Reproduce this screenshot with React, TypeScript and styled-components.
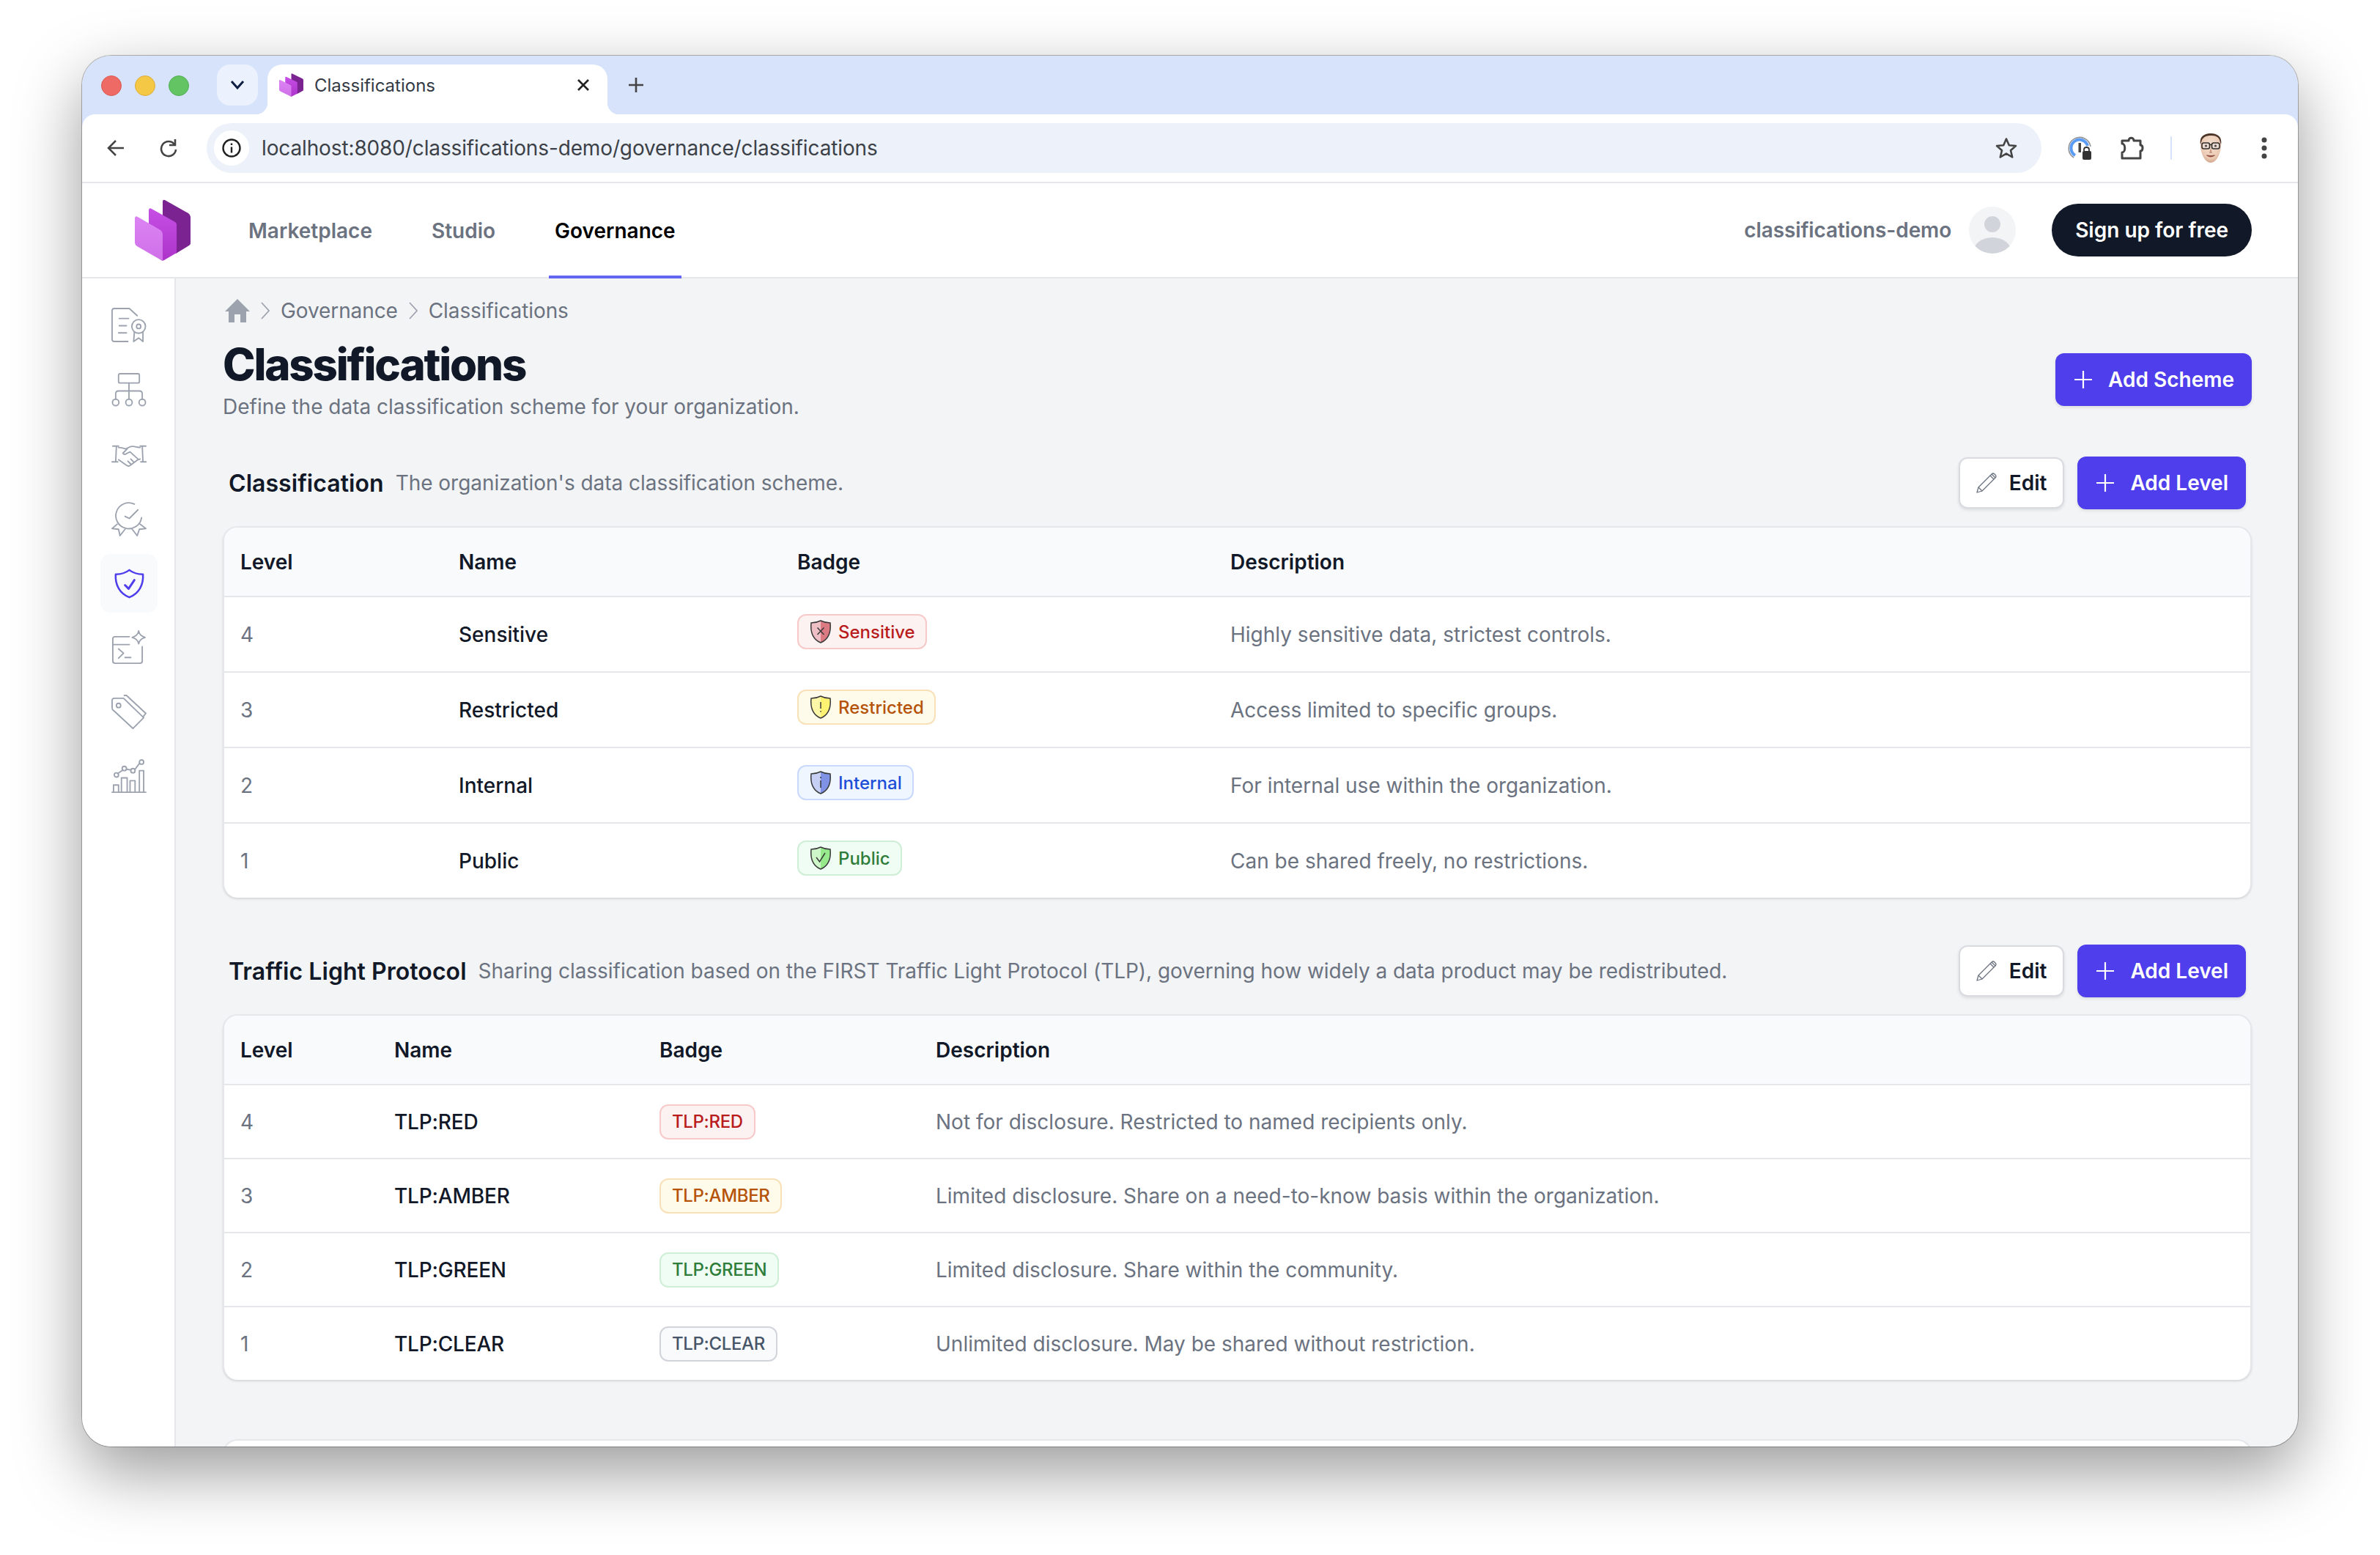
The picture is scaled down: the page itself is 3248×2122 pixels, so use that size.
import React from 'react';
import styled, { createGlobalStyle } from 'styled-components';

const GlobalStyle = createGlobalStyle`
  html, body {
    margin: 0;
    height: 100%;
    background: #fff;
    overflow: hidden;
  }
  * { box-sizing: border-box; }
  #root { height: 100%; }
`;

const Page = styled.div`
  height: 100%;
  padding: 76px 112px 148px;
  font-family: Inter, 'Noto Sans', sans-serif;
  color: #111827;
`;

const Window = styled.div`
  height: 100%;
  display: flex;
  flex-direction: column;
  overflow: hidden;
  border-radius: 40px;
  background: #f3f4f6;
  box-shadow: 0 0 0 1px rgba(0, 0, 0, 0.28), 0 34px 92px rgba(0, 0, 0, 0.4);
`;

/* browser chrome */
const TitleBar = styled.div`
  flex: none;
  height: 80px;
  padding: 12px 0 0 26px;
  display: flex;
  align-items: flex-start;
  background: #d6e3fa;
`;

const Lights = styled.div`
  height: 58px;
  display: flex;
  align-items: center;
  gap: 18px;
  margin-right: 38px;
`;

const Light = styled.span<{ $c: string; $b: string }>`
  width: 28px;
  height: 28px;
  border-radius: 50%;
  background: ${(p) => p.$c};
  border: 1px solid ${(p) => p.$b};
`;

const TabSearch = styled.div`
  width: 56px;
  height: 56px;
  margin-right: 13px;
  border-radius: 18px;
  background: #ebf1fd;
  display: flex;
  align-items: center;
  justify-content: center;
`;

const Tab = styled.div`
  position: relative;
  width: 464px;
  height: 68px;
  padding: 0 24px 12px 16px;
  display: flex;
  align-items: center;
  background: #fff;
  border-radius: 20px 20px 0 0;
  font-size: 24px;
  color: #333a45;

  &::before,
  &::after {
    content: '';
    position: absolute;
    bottom: 0;
    width: 16px;
    height: 16px;
  }
  &::before {
    left: -16px;
    background: radial-gradient(circle at 0 0, transparent 16px, #fff 16.5px);
  }
  &::after {
    right: -16px;
    background: radial-gradient(circle at 100% 0, transparent 16px, #fff 16.5px);
  }
`;

const TabTitle = styled.span`
  flex: 1;
  margin-left: 15px;
`;

const NewTab = styled.div`
  margin: 16px 0 0 27px;
  height: 24px;
  color: #444;
`;

const Toolbar = styled.div`
  flex: none;
  height: 92px;
  padding: 0 32px 0 33px;
  display: flex;
  align-items: center;
  background: #fff;
  border-radius: 18px 18px 0 0;
`;

const ToolbarStrip = styled.div`
  flex: none;
  background: #d6e3fa;
`;

const NavIcon = styled.div<{ $mr: number; $ml?: number }>`
  width: 24px;
  height: 30px;
  margin-left: ${(p) => p.$ml ?? 0}px;
  margin-right: ${(p) => p.$mr}px;
  display: flex;
  align-items: center;
  justify-content: center;
`;

const Omnibox = styled.div`
  width: 2504px;
  height: 68px;
  padding: 0 33px 0 10px;
  display: flex;
  align-items: center;
  border-radius: 34px;
  background: #edf2fa;
`;

const InfoDot = styled.div`
  flex: none;
  width: 48px;
  height: 48px;
  margin-right: 17px;
  border-radius: 50%;
  background: #fff;
  display: flex;
  align-items: center;
  justify-content: center;
`;

const Url = styled.span`
  flex: 1;
  font-size: 28px;
  letter-spacing: -0.13px;
  color: #3c4148;
`;

const ToolbarRight = styled.div`
  flex: 1;
  display: flex;
  align-items: center;
  padding-left: 36px;
`;

const ToolDivider = styled.span`
  width: 2px;
  height: 32px;
  margin: 0 38px 0 36px;
  border-radius: 2px;
  background: #d6e3fa;
`;

const Spacer = styled.div<{ $w: number }>`
  flex: none;
  width: ${(p) => p.$w}px;
`;

/* app header */
const AppHeader = styled.header`
  flex: none;
  height: 132px;
  padding-left: 72px;
  padding-right: 63px;
  display: flex;
  align-items: stretch;
  background: #fff;
  border-top: 2px solid #e5e7eb;
  border-bottom: 2px solid #e5e7eb;
`;

const LogoWrap = styled.div`
  display: flex;
  align-items: center;
  margin-right: 71px;
`;

const NavBar = styled.nav`
  flex: 1;
  display: flex;
  gap: 65px;
`;

const NavLink = styled.a<{ $active?: boolean }>`
  padding: 0 8px;
  margin-bottom: -2px;
  display: flex;
  align-items: center;
  font-size: 28px;
  font-weight: 600;
  color: ${(p) => (p.$active ? '#000' : '#6b7280')};
  border-bottom: 4px solid ${(p) => (p.$active ? '#6366f1' : 'transparent')};
  border-top: 4px solid transparent;
`;

const UserBox = styled.div`
  display: flex;
  align-items: center;
`;

const UserName = styled.span`
  font-size: 28px;
  font-weight: 600;
  letter-spacing: -0.1px;
  color: #6b7280;
  margin-right: 24px;
`;

const Avatar = styled.div`
  width: 64px;
  height: 64px;
  margin-right: 49px;
  border-radius: 50%;
  overflow: hidden;
  background: #f3f4f6;
`;

const SignUp = styled.button`
  height: 72px;
  padding: 0 32px;
  border: 0;
  border-radius: 36px;
  background: #111827;
  color: #fff;
  font: 600 28px Inter, sans-serif;
`;

/* body */
const Body = styled.div`
  flex: 1;
  min-height: 0;
  display: flex;
`;

const Sidebar = styled.aside`
  flex: none;
  width: 128px;
  padding: 24px 0 0 2px;
  display: flex;
  flex-direction: column;
  align-items: center;
  gap: 8px;
  background: #fff;
  border-right: 2px solid #e5e7eb;
`;

const SideItem = styled.div<{ $active?: boolean }>`
  width: 78px;
  height: 80px;
  border-radius: 14px;
  display: flex;
  align-items: center;
  justify-content: center;
  background: ${(p) => (p.$active ? '#f9fafb' : 'transparent')};
`;

const Content = styled.main`
  flex: 1;
  min-width: 0;
  padding: 24px 63px 0 64px;
  overflow: hidden;
`;

const Crumbs = styled.div`
  height: 40px;
  padding-left: 3px;
  display: flex;
  align-items: center;
  font-size: 28px;
  letter-spacing: -0.1px;
  color: #6b7280;
`;

const CrumbSep = styled.span`
  display: flex;
  margin: 0 15px;
`;

const PageHead = styled.div`
  margin-top: 17px;
  display: flex;
  align-items: center;
  justify-content: space-between;
`;

const PageTitle = styled.h1`
  margin: 0;
  font-size: 60px;
  line-height: 72px;
  font-weight: 800;
  letter-spacing: -2.2px;
  color: #111827;
`;

const PageSub = styled.p`
  margin: 2px 0 0;
  font-size: 28px;
  line-height: 40px;
  color: #6b7280;
`;

const Button = styled.button<{ $primary?: boolean }>`
  height: ${(p) => (p.$primary ? 72 : 70)}px;
  padding: 0 ${(p) => (p.$primary ? 24 : 22)}px;
  display: flex;
  align-items: center;
  gap: ${(p) => (p.$primary ? 20 : 17)}px;
  border-radius: 12px;
  font: 600 28px Inter, sans-serif;
  color: ${(p) => (p.$primary ? '#fff' : '#111827')};
  background: ${(p) => (p.$primary ? '#4e3eec' : '#fff')};
  border: ${(p) => (p.$primary ? '0' : '2px solid #d9dbe1')};
  box-shadow: 0 2px 4px rgba(0, 0, 0, 0.1);
`;

const SectionHead = styled.div<{ $top: number }>`
  height: 72px;
  margin-top: ${(p) => p.$top}px;
  padding: 0 8px;
  display: flex;
  align-items: center;
`;

const SectionTitle = styled.h2`
  margin: 0 16px 0 0;
  font-size: 32px;
  font-weight: 600;
  letter-spacing: 0.05px;
  color: #111827;
`;

const SectionDesc = styled.span`
  flex: 1;
  font-size: 28px;
  letter-spacing: -0.03px;
  color: #6b7280;
`;

const SectionActions = styled.div`
  display: flex;
  align-items: center;
  gap: 18px;
`;

const Card = styled.div`
  margin-top: 23px;
  background: #fff;
  border: 2px solid #e5e7eb;
  border-bottom: 0;
  border-radius: 20px;
  overflow: hidden;
  box-shadow: 0 2px 3px rgba(0, 0, 0, 0.12);
`;

const NextCard = styled(Card)`
  margin-top: 81px;
  height: 200px;
`;

const HeadRow = styled.div<{ $cols: string }>`
  height: 95px;
  display: grid;
  grid-template-columns: ${(p) => p.$cols};
  align-items: center;
  background: #f9fafb;
  border-bottom: 2px solid #e5e7eb;
  font-size: 28px;
  font-weight: 600;
`;

const Row = styled.div<{ $cols: string; $h: number }>`
  height: ${(p) => p.$h}px;
  display: grid;
  grid-template-columns: ${(p) => p.$cols};
  align-items: center;
  border-bottom: 2px solid #e5e7eb;
  font-size: 28px;

  &:last-child {
    border-bottom: 0;
    height: ${(p) => p.$h - 2}px;
  }
`;

const Cell = styled.div`
  padding-left: 22px;
`;

const LevelCell = styled(Cell)`
  color: #6b7280;
`;

const NameCell = styled(Cell)`
  font-weight: 500;
  color: #111827;
`;

const TlpName = styled(NameCell)`
  letter-spacing: -0.2px;
`;

const DescCell = styled(Cell)`
  color: #6b7280;
`;

type Tone = 'red' | 'amber' | 'blue' | 'green' | 'gray';

const tones: Record<Tone, { bg: string; border: string; text: string; light: string; dark: string }> = {
  red: { bg: '#fdf2f2', border: '#f7c9c9', text: '#b91c1c', light: '#eebfc4', dark: '#dc7a84' },
  amber: { bg: '#fffbeb', border: '#f8e0b8', text: '#b45309', light: '#fdf8a8', dark: '#fdf272' },
  blue: { bg: '#eff6ff', border: '#c9d9fd', text: '#1d4ed8', light: '#c6d0f4', dark: '#7f92e6' },
  green: { bg: '#f0fdf4', border: '#cfeed6', text: '#2e7d3a', light: '#cdf6c9', dark: '#96ea8c' },
  gray: { bg: '#f9fafb', border: '#d1d5db', text: '#475569', light: '#fff', dark: '#fff' },
};

const Badge = styled.span<{ $tone: Tone; $icon?: boolean }>`
  height: 48px;
  padding: ${(p) => (p.$icon ? '0 14px 0 16px' : '0 15px')};
  margin-bottom: ${(p) => (p.$icon ? 7 : 0)}px;
  display: inline-flex;
  align-items: center;
  gap: 10px;
  border-radius: 12px;
  font-size: 24px;
  font-weight: 500;
  letter-spacing: ${(p) => (p.$icon ? 0 : -0.35)}px;
  color: ${(p) => tones[p.$tone].text};
  background: ${(p) => tones[p.$tone].bg};
  border: 2px solid ${(p) => tones[p.$tone].border};
`;

const LogoMark = ({ w, h }: { w: number; h: number }) => (
  <svg width={w} height={h} viewBox="0 0 76 84" preserveAspectRatio="none">
    <defs>
      <linearGradient id="logoFront" x1="0" y1="0" x2="0" y2="1">
        <stop offset="0" stopColor="#dc84f4" />
        <stop offset="1" stopColor="#cf6fe8" />
      </linearGradient>
      <linearGradient id="logoMid" x1="0" y1="0" x2="0" y2="1">
        <stop offset="0" stopColor="#c64fe6" />
        <stop offset="1" stopColor="#ad33c9" />
      </linearGradient>
    </defs>
    <path d="M38 3Q38 0 41 1L73 19Q76 21 76 24V60Q76 62 74 63L56 74L38 60Z" fill="#7b2390" />
    <path d="M19 15Q19 11 23 13L55 31Q57 32 57 35V73L40 83Q38 84 36 83L19 60Z" fill="url(#logoMid)" />
    <path d="M0 26Q0 22 4 24L35 42Q38 44 38 47V84L36 83L3 64Q0 62 0 59Z" fill="url(#logoFront)" />
  </svg>
);

const IconGray = '#9ca3af';

const sideIcons: React.ReactNode[] = [
  <g key="doc">
    <path d="M22 46H3Q0 46 0 43V3Q0 0 3 0H24L35 10" />
    <path d="M10 14H23M10 24H20M9 34H20" />
    <circle cx="37" cy="25" r="9.5" />
    <circle cx="37" cy="25" r="3" />
    <path d="M31 33L30 46L37 41L43 46L43 33" />
  </g>,
  <g key="org">
    <rect x="9" y="1" width="29" height="13" rx="2" />
    <path d="M23.5 14V36M5 36V29Q5 25 9 25H38Q42 25 42 29V36" />
    <ellipse cx="5" cy="41" rx="4.5" ry="4.5" />
    <ellipse cx="23.5" cy="41" rx="4.5" ry="4.5" />
    <ellipse cx="42" cy="41" rx="4.5" ry="4.5" />
  </g>,
  <g key="hands">
    <path d="M1 12H9M6 12L5 34M0 34H8M39 12H47M42 12L43 34M40 34H48" />
    <path d="M9 14C13 14 16 15 19 16L25 13C30 11 34 14 39 14M39 30L36 31L25 39Q22 41 19 38L9 31" />
    <path d="M21 16L15 22Q17 25 21 22L25 20L36 30M30 34L26 30M26 37L22 33" />
  </g>,
  <g key="award">
    <path d="M31 3A18 18 0 1 0 41 22" />
    <path d="M18 20L24 23L36 11" />
    <path d="M7 31L0 37L9 38L11 47L18 38M39 31L47 37L38 38L35 47L28 38" />
  </g>,
  <g key="shield" stroke="#4e3eec" strokeWidth="2.6">
    <path d="M24 5C29 9 36 11 43 11C44 26 37 38 24 43C11 38 4 26 5 11C12 11 19 9 24 5Z" />
    <path d="M18 26L23 31L31 19" strokeWidth="3" />
  </g>,
  <g key="term">
    <path d="M24 8H4Q1 8 1 11V42Q1 45 4 45H39Q42 45 42 42V22M1 19H24" />
    <path d="M9 25L16 31L9 38M18 37H26" />
    <path d="M37 0Q38 7 46 9Q38 11 37 18Q36 11 28 9Q36 7 37 0Z" />
  </g>,
  <g key="tag">
    <path d="M3 4H16L44 31L29 46L2 21Q0 20 0 17V7Q0 4 3 4Z" />
    <circle cx="9" cy="14" r="3" />
    <path d="M17 0H20L47 25L43 30" />
  </g>,
  <g key="chart">
    <path d="M0 45H47M2 45V35H9V45M13 45V25H21V45M25 45V29H32V45M38 45V15H44V45" />
    <path d="M8 19L15 14M20 13L26 14M32 13L38 5" />
    <circle cx="6" cy="21" r="3" />
    <circle cx="17" cy="12" r="3" />
    <circle cx="29" cy="15" r="3" />
    <circle cx="41" cy="3" r="3" />
  </g>,
];

const SideIcon = ({ children }: { children: React.ReactNode }) => (
  <svg width="48" height="48" viewBox="-0.5 -1 48 49" fill="none" stroke={IconGray} strokeWidth="1.9" strokeLinecap="round" strokeLinejoin="round">
    {children}
  </svg>
);

const shieldMarks: Partial<Record<Tone, React.ReactNode>> = {
  red: <path d="M9.5 10.5L18.5 20M18.5 10.5L9.5 20" />,
  amber: <path d="M14 9V18M14 21V22.5" />,
  blue: <path d="M14 8V10M14 13V23" />,
  green: <path d="M8 15L12.5 21L20 9" />,
};

const ShieldIcon = ({ tone }: { tone: Tone }) => (
  <svg width="28" height="32" viewBox="0 0 28 32" fill="none">
    <path d="M14 1C18 3 23 4 27 4C28 14 26 26 14 31C2 26 0 14 1 4C5 4 10 3 14 1Z" fill={tones[tone].light} />
    <path d="M14 1C18 3 23 4 27 4C28 14 26 26 14 31Z" fill={tones[tone].dark} />
    <path d="M14 1C18 3 23 4 27 4C28 14 26 26 14 31C2 26 0 14 1 4C5 4 10 3 14 1Z" stroke="#3a3a3a" strokeWidth="1.5" />
    <g stroke="#3a3a3a" strokeWidth="1.5">{shieldMarks[tone]}</g>
  </svg>
);

const PencilIcon = () => (
  <svg width="28" height="28" viewBox="0 0 28 28" fill="none" stroke="#6b7280" strokeWidth="1.3" strokeLinejoin="round">
    <path d="M1 27L3 20L21 2Q23 0 25 2L26 3Q28 5 26 7L8 25Z" />
    <path d="M3 20L8 25M19 4L24 9M21 2L26 7" />
  </svg>
);

const PlusIcon = () => (
  <svg width="28" height="28" viewBox="0 0 28 28" fill="none" stroke="#fff" strokeWidth="2.2">
    <path d="M14 2V26M2 14H26" />
  </svg>
);

const FaceAvatar = () => (
  <svg width="30" height="40" viewBox="0 0 30 40">
    <defs>
      <radialGradient id="faceSkin" cx="0.5" cy="0.4" r="0.65">
        <stop offset="0" stopColor="#f3dfd0" />
        <stop offset="0.7" stopColor="#ebcab4" />
        <stop offset="1" stopColor="#c99a80" />
      </radialGradient>
    </defs>
    <path d="M1 12C0 4 7 0 15 0C23 0 30 4 29 12C30 24 24 40 15 40C6 40 0 24 1 12Z" fill="url(#faceSkin)" />
    <path d="M1 15C-1 5 6 0 15 0C24 0 31 5 29 15L27 9C25 4 21 3 15 3C9 3 5 5 3 9Z" fill="#4a3428" />
    <rect x="3" y="13" width="10.5" height="8" rx="2.5" fill="#e9d9ce" stroke="#34302e" strokeWidth="1.6" />
    <rect x="16.5" y="13" width="10.5" height="8" rx="2.5" fill="#e9d9ce" stroke="#34302e" strokeWidth="1.6" />
    <path d="M13.5 15.5H16.5" stroke="#34302e" strokeWidth="1.4" />
    <circle cx="8.5" cy="17" r="1.6" fill="#4e4a48" />
    <circle cx="21.5" cy="17" r="1.6" fill="#4e4a48" />
    <path d="M15 20L13 27H17Z" fill="#c99a80" />
    <path d="M9.5 30Q15 34 20.5 30Q15 31 9.5 30Z" fill="#8e4a3e" stroke="#8e4a3e" strokeWidth="0.9" />
  </svg>
);

const Columns = {
  first: '298px 462px 591px 1fr',
  second: '210px 362px 377px 1fr',
};

const classificationRows: { level: number; name: string; tone: Tone; desc: string }[] = [
  { level: 4, name: 'Sensitive', tone: 'red', desc: 'Highly sensitive data, strictest controls.' },
  { level: 3, name: 'Restricted', tone: 'amber', desc: 'Access limited to specific groups.' },
  { level: 2, name: 'Internal', tone: 'blue', desc: 'For internal use within the organization.' },
  { level: 1, name: 'Public', tone: 'green', desc: 'Can be shared freely, no restrictions.' },
];

const tlpRows: { level: number; name: string; tone: Tone; desc: string }[] = [
  { level: 4, name: 'TLP:RED', tone: 'red', desc: 'Not for disclosure. Restricted to named recipients only.' },
  { level: 3, name: 'TLP:AMBER', tone: 'amber', desc: 'Limited disclosure. Share on a need-to-know basis within the organization.' },
  { level: 2, name: 'TLP:GREEN', tone: 'green', desc: 'Limited disclosure. Share within the community.' },
  { level: 1, name: 'TLP:CLEAR', tone: 'gray', desc: 'Unlimited disclosure. May be shared without restriction.' },
];

const TableHead = ({ cols }: { cols: string }) => (
  <HeadRow $cols={cols}>
    <Cell>Level</Cell>
    <Cell>Name</Cell>
    <Cell>Badge</Cell>
    <Cell>Description</Cell>
  </HeadRow>
);

const Actions = () => (
  <SectionActions>
    <Button>
      <PencilIcon />
      Edit
    </Button>
    <Button $primary>
      <PlusIcon />
      Add Level
    </Button>
  </SectionActions>
);

const ChevronSep = () => (
  <svg width="12" height="24" viewBox="0 0 12 24" fill="none" stroke="#9ca3af" strokeWidth="1.7">
    <path d="M1 1L11 12L1 23" />
  </svg>
);

const App = () => {
  return (
    <Page>
      <GlobalStyle />
      <Window>
        <TitleBar>
          <Lights>
            <Light $c="#ee6a64" $b="#d95a54" />
            <Light $c="#f4c745" $b="#dcae38" />
            <Light $c="#63c463" $b="#52ad53" />
          </Lights>
          <TabSearch>
            <svg width="20" height="14" viewBox="0 0 20 14" fill="none" stroke="#0f1f44" strokeWidth="3">
              <path d="M2 2L10 11L18 2" />
            </svg>
          </TabSearch>
          <Tab>
            <LogoMark w={33} h={32} />
            <TabTitle>Classifications</TabTitle>
            <svg width="18" height="18" viewBox="0 0 18 18" stroke="#222" strokeWidth="2.6">
              <path d="M2 2L16 16M16 2L2 16" />
            </svg>
          </Tab>
          <NewTab>
            <svg width="24" height="24" viewBox="0 0 24 24" stroke="#444" strokeWidth="2.6">
              <path d="M12 2V22M2 12H22" />
            </svg>
          </NewTab>
        </TitleBar>
        <ToolbarStrip>
          <Toolbar>
            <NavIcon $ml={1} $mr={48}>
              <svg width="24" height="24" viewBox="0 0 24 24" fill="none" stroke="#444" strokeWidth="2.5">
                <path d="M23 12H3M12 2L2 12L12 22" />
              </svg>
            </NavIcon>
            <NavIcon $mr={40}>
              <svg width="24" height="26" viewBox="0 0 24 26" fill="none" stroke="#444" strokeWidth="2.6">
                <path d="M20 8A10 10 0 1 0 22 15" />
                <path d="M21 1V9H13" />
              </svg>
            </NavIcon>
            <Omnibox>
              <InfoDot>
                <svg width="26" height="26" viewBox="0 0 26 26" fill="none" stroke="#222" strokeWidth="2.4">
                  <circle cx="13" cy="13" r="11.5" />
                  <path d="M13 11.5V19.5M13 6.5V9" />
                </svg>
              </InfoDot>
              <Url>localhost:8080/classifications-demo/governance/classifications</Url>
              <svg width="30" height="30" viewBox="0 0 30 30" fill="none" stroke="#444" strokeWidth="2.6" strokeLinejoin="round">
                <path d="M15 2.5L18.8 11.2L28 12L21 18.2L23.2 27.5L15 22.6L6.8 27.5L9 18.2L2 12L11.2 11.2Z" />
              </svg>
            </Omnibox>
            <ToolbarRight>
              <svg width="32" height="32" viewBox="0 0 32 32" fill="none">
                <path d="M8 29A15 15 0 1 1 31 14" stroke="#8f9399" strokeWidth="1.6" />
                <path d="M10 26A11.5 11.5 0 1 1 27 13" stroke="#5a9bf6" strokeWidth="4" />
                <rect x="14.5" y="9" width="3.5" height="13" fill="#444" />
                <path d="M22 20V18Q22 15 25.5 15Q29 15 29 18V20" stroke="#333" strokeWidth="1.8" />
                <rect x="20" y="20" width="12" height="12" rx="2" fill="#333" />
              </svg>
              <Spacer $w={40} />
              <svg width="32" height="32" viewBox="0 0 32 32" fill="none" stroke="#444" strokeWidth="3" strokeLinejoin="round">
                <path d="M2 6H11C11 1 18 1 18 6H27V12C31 12 31 20 27 20V30H2V22C7 22 7 10 2 10Z" />
              </svg>
              <ToolDivider />
              <FaceAvatar />
              <Spacer $w={54} />
              <svg width="8" height="32" viewBox="0 0 8 32" fill="#444">
                <circle cx="4" cy="5" r="3.5" />
                <circle cx="4" cy="16" r="3.5" />
                <circle cx="4" cy="27" r="3.5" />
              </svg>
            </ToolbarRight>
          </Toolbar>
        </ToolbarStrip>
        <AppHeader>
          <LogoWrap>
            <LogoMark w={76} h={84} />
          </LogoWrap>
          <NavBar>
            <NavLink>Marketplace</NavLink>
            <NavLink>Studio</NavLink>
            <NavLink $active>Governance</NavLink>
          </NavBar>
          <UserBox>
            <UserName>classifications-demo</UserName>
            <Avatar>
              <svg width="64" height="64" viewBox="0 0 64 64" fill="#d1d5db">
                <circle cx="32" cy="24" r="11" />
                <ellipse cx="32" cy="62" rx="26" ry="20" />
              </svg>
            </Avatar>
            <SignUp>Sign up for free</SignUp>
          </UserBox>
        </AppHeader>
        <Body>
          <Sidebar>
            {sideIcons.map((icon, i) => (
              <SideItem key={i} $active={i === 4}>
                <SideIcon>{icon}</SideIcon>
              </SideItem>
            ))}
          </Sidebar>
          <Content>
            <Crumbs>
              <svg width="34" height="32" viewBox="0 0 34 32" fill="#9ca3af">
                <path d="M17 0L34 17H29V32H21V21H13V32H5V17H0Z" />
              </svg>
              <CrumbSep>
                <ChevronSep />
              </CrumbSep>
              Governance
              <CrumbSep>
                <ChevronSep />
              </CrumbSep>
              Classifications
            </Crumbs>
            <PageHead>
              <div>
                <PageTitle>Classifications</PageTitle>
                <PageSub>Define the data classification scheme for your organization.</PageSub>
              </div>
              <Button $primary>
                <PlusIcon />
                Add Scheme
              </Button>
            </PageHead>

            <SectionHead $top={48}>
              <SectionTitle>Classification</SectionTitle>
              <SectionDesc>The organization's data classification scheme.</SectionDesc>
              <Actions />
            </SectionHead>
            <Card>
              <TableHead cols={Columns.first} />
              {classificationRows.map((r) => (
                <Row key={r.name} $cols={Columns.first} $h={103}>
                  <LevelCell>{r.level}</LevelCell>
                  <NameCell>{r.name}</NameCell>
                  <Cell>
                    <Badge $tone={r.tone} $icon>
                      <ShieldIcon tone={r.tone} />
                      {r.name}
                    </Badge>
                  </Cell>
                  <DescCell>{r.desc}</DescCell>
                </Row>
              ))}
            </Card>

            <SectionHead $top={64}>
              <SectionTitle>Traffic Light Protocol</SectionTitle>
              <SectionDesc>
                Sharing classification based on the FIRST Traffic Light Protocol (TLP), governing how widely a data product may be redistributed.
              </SectionDesc>
              <Actions />
            </SectionHead>
            <Card>
              <TableHead cols={Columns.second} />
              {tlpRows.map((r) => (
                <Row key={r.name} $cols={Columns.second} $h={101}>
                  <LevelCell>{r.level}</LevelCell>
                  <TlpName>{r.name}</TlpName>
                  <Cell>
                    <Badge $tone={r.tone}>{r.name}</Badge>
                  </Cell>
                  <DescCell>{r.desc}</DescCell>
                </Row>
              ))}
            </Card>
            <NextCard />
          </Content>
        </Body>
      </Window>
    </Page>
  );
};

export default App;
